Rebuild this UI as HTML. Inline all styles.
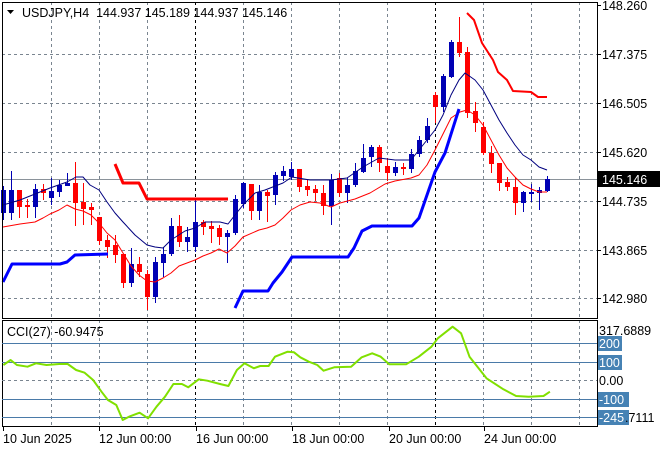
<!DOCTYPE html>
<html><head><meta charset="utf-8"><style>
html,body{margin:0;padding:0;background:#fff;}
svg{display:block;font-family:"Liberation Sans",sans-serif;font-size:12.5px;}
</style></head><body>
<svg id="c" width="660" height="450" xmlns="http://www.w3.org/2000/svg"></svg>
<script>
var s='';
function L(x1,y1,x2,y2,c,w,d){s+='<line x1="'+x1+'" y1="'+y1+'" x2="'+x2+'" y2="'+y2+'" stroke="'+c+'" stroke-width="'+(w||1)+'"'+(d?' stroke-dasharray="'+d+'"':'')+'/>';}
function P(pts,c,w){s+='<polyline fill="none" stroke="'+c+'" stroke-width="'+w+'" stroke-linejoin="round" points="'+pts.join(' ')+'"/>';}
function T(x,y,t,c,a){s+='<text x="'+x+'" y="'+y+'" fill="'+(c||'#000')+'"'+(a?' '+a:'')+'>'+t+'</text>';}
var g='#7a8590';
[54,103,152,201,250,298].forEach(function(y){L(2,y+.5,597,y+.5,g,1,'3,3');});
var vx=[51,99,147,195,243,291,339,387,435,483,531,579];
vx.forEach(function(x){var k=(x==195||x==435);L(x+.5,2,x+.5,318,k?'#000':g,1,'3,3');L(x+.5,320,x+.5,426,k?'#000':g,1,'3,3');});
L(2,179.5,597,179.5,'#8a929a',1);
var C=[
[1,190,213,186,220],[1,190,213,171,220],[0,190,207,190,218],[0,205,207,199,218],[1,189,207,184,218],[0,189,193,184,200],[1,191,198,178,205],[1,185,192,180,197],[1,183,186,173,186],[0,183,203,162,226],
[0,202,209,183,225],[0,207,210,203,225],[0,217,241,217,245],[0,240,247,235,258],[0,245,255,235,263],[0,254,283,254,288],[1,264,283,248,287],[0,264,272,257,277],[0,274,297,270,310],[1,262,297,257,303],
[1,254,263,247,277],[1,226,254,218,256],[0,226,242,215,247],[1,237,242,227,252],[1,222,247,200,252],[0,222,227,220,235],[0,226,229,221,243],[0,228,237,225,245],[1,233,237,230,263],[1,199,233,195,235],
[1,183,204,182,208],[0,184,211,184,220],[1,192,211,185,220],[0,192,196,190,222],[1,175,195,172,205],[1,171,176,166,181],[1,169,177,162,180],[0,169,187,169,192],[0,186,190,180,196],[0,189,193,185,201],
[0,193,206,185,215],[1,180,206,174,225],[0,178,193,173,197],[1,185,193,178,203],[1,171,185,163,187],[1,158,172,144,173],[1,147,157,145,167],[0,147,163,145,172],[0,166,173,158,181],[1,167,173,162,176],
[0,167,169,163,175],[1,154,169,149,173],[1,140,154,136,157],[1,126,140,118,143],[0,95,107,92,123],[1,76,107,74,112],[1,42,77,40,78],[0,42,53,17,57],[0,52,113,47,118],[0,111,123,102,132],
[0,127,153,122,155],[0,153,164,146,173],[0,163,183,163,191],[0,182,187,177,191],[0,187,203,177,215],[1,192,203,191,212],[1,192,194,184,202],[1,190,193,187,210],[1,179,191,176,192]];
C.forEach(function(c,i){var x=3+8*i;var col=c[0]?'#0000b4':'#ff0000';L(x+.5,c[3],x+.5,c[4],col,1);s+='<rect x="'+(x-2)+'" y="'+c[1]+'" width="5" height="'+Math.max(1,c[2]-c[1])+'" fill="'+col+'"/>';});
P([[3,205],[20,200],[50,188],[67,182],[76,177],[83,177],[90,185],[99,190],[107,202],[115,213],[123,222],[135,235],[147,245],[155,247],[163,248],[171,240],[185,231],[195,228],[205,222],[220,222],[228,224],[235,215],[243,205],[255,193],[265,190],[283,183],[292,177],[310,180],[331,180],[347,178],[363,167],[379,158],[395,160],[411,160],[419,150],[427,140],[435,130],[443,115],[451,95],[459,80],[465,73],[475,80],[483,90],[491,105],[499,120],[507,133],[515,145],[523,155],[531,160],[539,167],[547,170]],'#00007f',1);
P([[3,227],[20,224],[35,222],[43,218],[50,214],[59,210],[67,205],[75,209],[83,211],[91,215],[99,223],[107,233],[115,240],[123,253],[131,266],[139,275],[147,281],[155,282],[163,278],[171,273],[179,266],[187,263],[195,260],[203,256],[211,253],[219,249],[227,253],[235,246],[243,237],[259,230],[267,228],[275,225],[283,218],[291,210],[300,205],[310,202],[320,203],[331,207],[340,203],[355,199],[370,193],[385,184],[395,181],[411,178],[419,175],[427,165],[435,150],[445,130],[451,118],[460,112],[467,110],[475,115],[483,125],[491,140],[499,155],[507,168],[515,177],[523,185],[531,189],[539,192],[547,192]],'#ff0000',1);
P([[115,164],[123,183],[139,183],[147,199],[228,199]],'#ff0000',3);
P([[467,13],[474,20],[482,43],[493,60],[498,72],[507,80],[513,91],[531,92],[538,97],[547,97]],'#ff0000',2);
P([[3,282],[12,264],[60,264],[67,262],[75,255],[108,254]],'#0000ff',3);
P([[235,308],[243,291],[268,291],[273,283],[282,272],[292,257],[348,257],[354,248],[362,231],[372,226],[412,226],[419,218],[427,195],[435,172],[445,153],[459,109]],'#0000ff',3);
s+='<rect x="2.5" y="2.5" width="595" height="316" fill="none" stroke="#000"/>';
s+='<rect x="2.5" y="320.5" width="595" height="106" fill="none" stroke="#000"/>';
[343,362,399,417].forEach(function(y){L(2,y+.5,597,y+.5,'#4a7aa8',1);});
L(2,380.5,597,380.5,g,1,'3,3');
var cx=[3.4,10.6,16.9,27.5,36,46.5,59.2,67.7,76.1,84.6,93.1,101.5,107.9,116.3,122.7,129,139.6,148.1,156.5,165,173.4,181.9,188.2,198.8,207.3,220,228.4,236.9,244.5,253.8,260.2,268.6,275,287.6,294,300.3,308.8,317.3,323.6,334.2,351.1,361.7,372.2,380.7,389.2,406.1,418.8,431.5,437.8,452.6,461.1,469.5,486.5,503.4,516.1,528.7,543.5,549.9];
var cy=[365,360,365,366.7,363.3,365,364,364,370,372.7,380,391.7,400,405,420,416.7,412.7,418.3,406.7,396.7,384,384,387.3,379.3,380.7,384,386,370,363.3,368.3,366,366,356.7,351.7,352.3,357.3,361.7,365,370.7,367.3,366.7,357.3,353.3,356.7,364.3,364.3,356.7,346.7,338.3,326.7,333.3,356.7,378.3,389.3,396,396.7,396,391.7];
P(cx.map(function(x,i){return [x,cy[i]];}),'#80e000',2);
s+='<polygon points="7,10 14,10 10.5,14" fill="#000"/>';
T(22,17,'USDJPY,H4&#160; 144.937 145.189 144.937 145.146','#000');
T(7,336,'CCI(27) -60.9475','#000');
var pl=[[5,'148.260'],[54,'147.375'],[103,'146.505'],[152,'145.620'],[201,'144.735'],[250,'143.865'],[298,'142.980']];
pl.forEach(function(p){L(597,p[0]+.5,601,p[0]+.5,'#000');T(602,p[0]+5,p[1]);});
s+='<rect x="598" y="171" width="62" height="16" fill="#000"/>';T(602,184,'145.146','#fff');
T(599,335,'317.6889');
[[343,'200'],[362,'100'],[399,'-100'],[417,'-245']].forEach(function(p){s+='<rect x="598" y="'+(p[0]-7)+'" width="'+(p[1].length*7+3)+'" height="15" fill="#4682b4"/>';T(599,p[0]+5,p[1],'#fff');});
T(599,385,'0.00');
T(625,422,'.7111');
[[3,'10 Jun 2025'],[99,'12 Jun 00:00'],[196,'16 Jun 00:00'],[292,'18 Jun 00:00'],[389,'20 Jun 00:00'],[484,'24 Jun 00:00']].forEach(function(t){L(t[0]+.5,426,t[0]+.5,431,'#000');T(t[0],443,t[1]);});
document.getElementById('c').innerHTML=s;
</script>
</body></html>
